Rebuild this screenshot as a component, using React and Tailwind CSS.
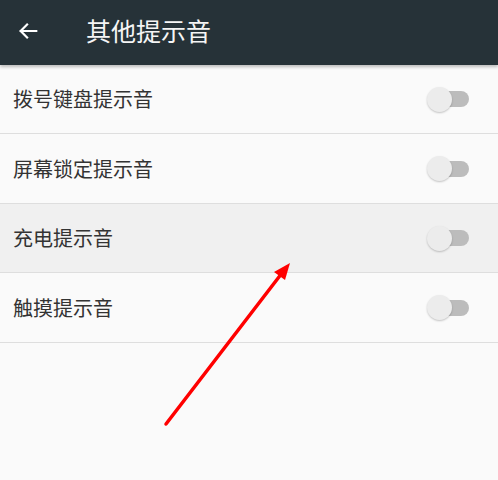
import React from "react";

const rows = [
    { label: "拨号键盘提示音", pressed: false, h: "h-[69px]" },
    { label: "屏幕锁定提示音", pressed: false, h: "h-[70px]" },
    { label: "充电提示音", pressed: true, h: "h-[69px]" },
    { label: "触摸提示音", pressed: false, h: "h-[70px]" },
];

const Toggle = () => (
    <div className="relative w-[42px] h-[26px] flex items-center">
        <div className="absolute left-[10px] w-[32px] h-[16px] rounded-full bg-[#bcbcbc]" />
        <div className="absolute left-0 w-[25px] h-[25px] rounded-full bg-[#ececec] shadow-[0_1px_2px_rgba(0,0,0,0.22)]" />
    </div>
);

export default function App() {
    return (
        <div
            className="relative w-[498px] h-[480px] bg-[#fafafa] overflow-hidden"
            style={{ fontFamily: '"Noto Sans CJK SC", "Noto Sans", sans-serif' }}
        >
            <div className="h-[65px] pb-[4px] bg-[#263238] flex items-center shadow-[0_2px_3px_rgba(0,0,0,0.25)]">
                <svg className="ml-[17px]" width="22" height="22" viewBox="0 0 24 24" fill="none" stroke="#ffffff" strokeWidth="2.4" strokeLinecap="square">
                    <path d="M21 12H4M11 5l-7 7 7 7" />
                </svg>
                <div className="ml-[47px] text-[25px] text-[#f5f5f5] leading-none">其他提示音</div>
            </div>
            <div>
                {rows.map((row) => (
                    <div
                        key={row.label}
                        className={`${row.h} flex items-center justify-between border-b border-[#dedede] pl-[13px] pr-[29px] ${row.pressed ? "bg-[#f0f0f0]" : ""}`}
                    >
                        <div className="text-[20px] text-[#333333]">{row.label}</div>
                        <Toggle />
                    </div>
                ))}
            </div>
            <svg className="absolute left-0 top-0 pointer-events-none" width="498" height="480">
                <line x1="166" y1="424" x2="282" y2="273" stroke="#ff0000" strokeWidth="3.5" strokeLinecap="round" />
                <polygon points="290,263 274,272 285,280" fill="#ff0000" />
            </svg>
        </div>
    );
}
